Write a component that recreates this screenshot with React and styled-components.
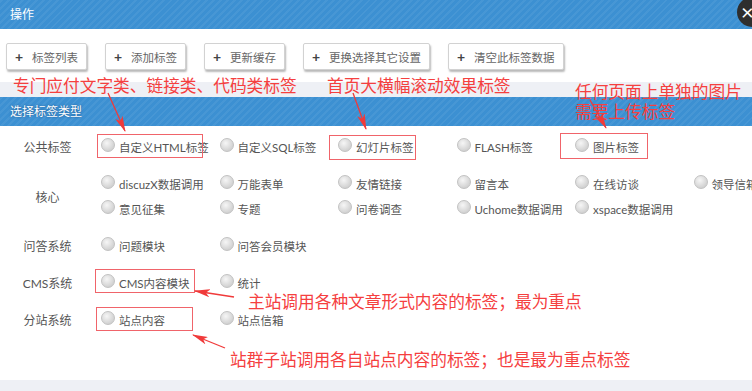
import React from "react";
import styled, { createGlobalStyle } from "styled-components";

const GlobalStyle = createGlobalStyle`
  html, body {
    margin: 0;
    padding: 0;
    background: #eef0f5;
  }
  body {
    font-family: Lato, "Noto Sans CJK SC", sans-serif;
    font-size: 12px;
    color: #555;
  }
`;

const buttons = [
  "标签列表",
  "添加标签",
  "更新缓存",
  "更换选择其它设置",
  "清空此标签数据",
];

const groups = [
  {
    title: "公共标签",
    lines: [["自定义HTML标签", "自定义SQL标签", "幻灯片标签", "FLASH标签", "图片标签"]],
  },
  {
    title: "核心",
    lines: [
      ["discuzX数据调用", "万能表单", "友情链接", "留言本", "在线访谈", "领导信箱"],
      ["意见征集", "专题", "问卷调查", "Uchome数据调用", "xspace数据调用"],
    ],
  },
  { title: "问答系统", lines: [["问题模块", "问答会员模块"]] },
  { title: "CMS系统", lines: [["CMS内容模块", "统计"]] },
  { title: "分站系统", lines: [["站点内容", "站点信箱"]] },
];

const notes = [
  { x: 13, y: 75, lines: ["专门应付文字类、链接类、代码类标签"] },
  { x: 327, y: 75, lines: ["首页大横幅滚动效果标签"] },
  { x: 575, y: 81, lines: ["任何页面上单独的图片", "需要上传标签"] },
  { x: 248, y: 291, lines: ["主站调用各种文章形式内容的标签；最为重点"] },
  { x: 230, y: 349, lines: ["站群子站调用各自站点内容的标签；也是最为重点标签"] },
];

const marks = [
  { x: 97, y: 134, w: 106, h: 24 },
  { x: 329, y: 135, w: 87, h: 25 },
  { x: 560, y: 133, w: 88, h: 26 },
  { x: 95, y: 269, w: 100, h: 24 },
  { x: 96, y: 307, w: 97, h: 24 },
];

const arrows = [
  [108, 93, 125, 131],
  [353, 93, 366, 129],
  [590, 100, 606, 128],
  [234, 297, 195, 291],
  [225, 348, 193, 335],
];

const App = () => {
  return (
    <Page>
      <GlobalStyle />
      <Panel>
        <PanelHeader>操作</PanelHeader>
        <Toolbar>
          {buttons.map((b) => (
            <ToolButton key={b}>
              <Plus>+</Plus>
              {b}
            </ToolButton>
          ))}
        </Toolbar>
      </Panel>

      <Panel>
        <PanelHeader shadowed>选择标签类型</PanelHeader>
        <TypeBody>
          {groups.map((g) => (
            <Group key={g.title}>
              <GroupTitle>{g.title}</GroupTitle>
              <Lines>
                {g.lines.map((line, i) => (
                  <OptionLine key={i}>
                    {line.map((opt) => (
                      <Option key={opt}>
                        <Radio />
                        {opt}
                      </Option>
                    ))}
                  </OptionLine>
                ))}
              </Lines>
            </Group>
          ))}
        </TypeBody>
      </Panel>

      <CloseButton>×</CloseButton>

      <Annotations>
        {marks.map((m, i) => (
          <Mark
            key={i}
            style={{ left: m.x, top: m.y, width: m.w, height: m.h }}
          />
        ))}
        {notes.map((n, i) => (
          <Note key={i} style={{ left: n.x, top: n.y }}>
            {n.lines.map((l) => (
              <div key={l}>{l}</div>
            ))}
          </Note>
        ))}
        <ArrowLayer width="752" height="391" viewBox="0 0 752 391">
          <defs>
            <marker
              id="head"
              viewBox="0 0 16 8"
              refX="15"
              refY="4"
              markerWidth="16"
              markerHeight="8"
              markerUnits="userSpaceOnUse"
              orient="auto"
            >
              <path d="M0 0 L16 4 L0 8 L4 4 Z" fill="#f03a3a" />
            </marker>
          </defs>
          {arrows.map(([x1, y1, x2, y2], i) => (
            <line
              key={i}
              x1={x1}
              y1={y1}
              x2={x2}
              y2={y2}
              stroke="#f03a3a"
              strokeWidth="1.3"
              markerEnd="url(#head)"
            />
          ))}
        </ArrowLayer>
      </Annotations>
    </Page>
  );
};

export default App;

const Page = styled.div`
  position: relative;
  width: 752px;
  height: 391px;
  overflow: hidden;
  display: flex;
  flex-direction: column;
  gap: 15px;
`;

const Panel = styled.section`
  background: #fff;
`;

const PanelHeader = styled.div`
  height: 29px;
  line-height: 29px;
  padding-left: 10px;
  color: #fff;
  font-size: 12px;
  background-color: #3c90d2;
  background-image: repeating-linear-gradient(
    -45deg,
    rgba(255, 255, 255, 0.06) 0px,
    rgba(255, 255, 255, 0.06) 2px,
    transparent 2px,
    transparent 5px
  );
  text-shadow: ${({ shadowed }) =>
    shadowed ? "0 0 2px rgba(0, 40, 90, 0.6)" : "none"};
`;

const Toolbar = styled.div`
  display: flex;
  gap: 18px;
  padding: 14px 6px 12px;
`;

const ToolButton = styled.button`
  display: flex;
  align-items: center;
  height: 27px;
  padding: 0 8px 0 8px;
  border: 1px solid #d2d2d2;
  border-radius: 2px;
  background: #fff;
  box-shadow: 1px 2px 2px rgba(0, 0, 0, 0.28);
  font-family: inherit;
  font-size: 11.5px;
  color: #666;
  white-space: nowrap;
`;

const Plus = styled.span`
  width: 7px;
  margin-right: 10px;
  font-size: 14px;
  font-weight: 700;
  color: #444;
  line-height: 1;
`;

const TypeBody = styled.div`
  display: flex;
  flex-direction: column;
  gap: 12px;
  padding: 8px 0 48px;
`;

const Group = styled.div`
  display: grid;
  grid-template-columns: 95px 1fr;
  align-items: center;
`;

const GroupTitle = styled.div`
  text-align: center;
  color: #555;
`;

const Lines = styled.div`
  display: flex;
  flex-direction: column;
`;

const OptionLine = styled.div`
  display: grid;
  grid-template-columns: repeat(6, 118.5px);
  height: 25px;
  align-items: center;
`;

const Option = styled.label`
  display: flex;
  align-items: center;
  gap: 4px;
  padding-left: 6px;
  white-space: nowrap;
  color: #555;
  font-size: 11.5px;
`;

const Radio = styled.span`
  width: 12px;
  height: 12px;
  border-radius: 50%;
  border: 1px solid #c2c2c2;
  background: radial-gradient(circle at 40% 35%, #f6f6f6 0%, #dadada 55%, #c4c4c4 100%);
  flex: none;
  margin-top: -3px;
`;

const CloseButton = styled.div`
  position: absolute;
  left: 737px;
  top: -3px;
  width: 30px;
  height: 30px;
  border-radius: 50%;
  background: #2e2e2e;
  color: #fff;
  font-size: 22px;
  line-height: 30px;
  padding-left: 4px;
  box-sizing: border-box;
`;

const Annotations = styled.div`
  position: absolute;
  inset: 0;
  pointer-events: none;
`;

const Mark = styled.div`
  position: absolute;
  box-sizing: border-box;
  border: 1.5px solid #f0646a;
`;

const Note = styled.div`
  position: absolute;
  color: #f5403f;
  font-family: "Noto Sans CJK SC", sans-serif;
  font-size: 16.7px;
  line-height: 20px;
  white-space: nowrap;
`;

const ArrowLayer = styled.svg`
  position: absolute;
  left: 0;
  top: 0;
`;
